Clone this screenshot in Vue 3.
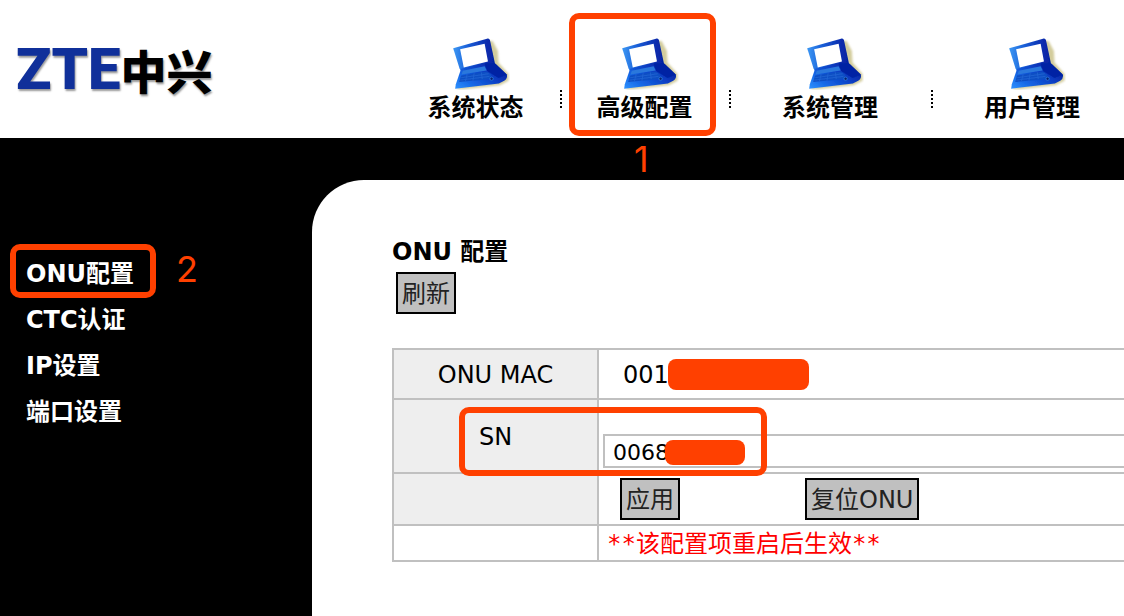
<script setup>
import { ref } from 'vue'

const tabs = [
  { label: '系统状态', wide: false, marked: false },
  { label: '高级配置', wide: false, marked: true },
  { label: '系统管理', wide: true, marked: false },
  { label: '用户管理', wide: true, marked: false },
]
const menu = ['ONU配置', 'CTC认证', 'IP设置', '端口设置']
const sn = ref('0068')
</script>

<template>
  <div class="page">
    <svg class="defs" aria-hidden="true">
      <defs>
        <linearGradient id="lid" x1="0" y1="0" x2="1" y2="0">
          <stop offset="0" stop-color="#3c98f4" />
          <stop offset="0.35" stop-color="#1a5fd8" />
          <stop offset="0.8" stop-color="#0a2cae" />
          <stop offset="1" stop-color="#0522a0" />
        </linearGradient>
        <linearGradient id="base" x1="0" y1="1" x2="1" y2="0.3">
          <stop offset="0" stop-color="#2f93ff" />
          <stop offset="0.3" stop-color="#1668e6" />
          <stop offset="0.7" stop-color="#0a3cc2" />
          <stop offset="1" stop-color="#041e98" />
        </linearGradient>
        <filter id="soft" x="-10%" y="-10%" width="120%" height="120%">
          <feGaussianBlur stdDeviation="2.5" />
        </filter>
        <filter id="edge" x="-10%" y="-10%" width="120%" height="120%">
          <feGaussianBlur stdDeviation="1.8" />
        </filter>
      </defs>
    </svg>

    <header class="header">
      <div class="logo"><span class="logo-latin">ZTE</span><span class="logo-han">中兴</span></div>
      <nav class="tabs">
        <a v-for="t in tabs" :key="t.label" href="#" class="tab" :class="{ wide: t.wide }">
          <svg class="laptop" viewBox="0 0 180 160" aria-hidden="true">
            <path d="M112 12 L128 12 L144 42 L146 78 L176 112 L176 132 L150 146 L40 158 L20 157 Z" fill="#d3cc9c" filter="url(#soft)" />
            <g filter="url(#edge)">
              <path d="M9 34 L111 5 Q117 4 120 9 L136 84 L128 92 L34 106 L28 94 Z" fill="url(#lid)" />
              <path d="M30 37 L104 20 L114 74 L41 92 Z" fill="#fff" />
              <path d="M33 96 L118 77 L137 81 L171 113 Q174 124 163 132 L147 140 L15 156 L17 143 Z" fill="url(#base)" />
              <path d="M104 80 L136 81 L170 113 L146 124 L112 103 Z" fill="#0324a4" />
              <path d="M38 102 L104 88 L110 101 L34 113 Z" fill="#2c78dc" />
              <path d="M33 116 L110 104 L124 114 L120 127 L27 136 Z" fill="#0f4fc4" />
              <path d="M33 123 L116 111 M31 130 L118 119 M51 113 L46 134 M72 110 L69 131 M94 107 L97 127" stroke="#2368d6" stroke-width="2" fill="none" />
              <circle cx="125" cy="126" r="5" fill="#062078" stroke="#368de8" stroke-width="2" />
            </g>
          </svg>
          <span>{{ t.label }}</span>
          <span v-if="t.marked" class="mark mark-tab"></span>
          <span v-if="t.marked" class="step step-tab">1</span>
        </a>
      </nav>
    </header>

    <div class="body">
      <aside class="side">
        <ul class="menu">
          <li v-for="(m, i) in menu" :key="m">
            <a href="#">{{ m }}</a>
            <template v-if="i === 0">
              <span class="mark mark-menu"></span>
              <span class="step step-menu">2</span>
            </template>
          </li>
        </ul>
      </aside>

      <main class="main">
        <h1>ONU 配置</h1>
        <button type="button" class="btn refresh">刷新</button>
        <table class="grid">
          <tbody>
            <tr class="row-mac">
              <th scope="row">ONU MAC</th>
              <td class="mac">001<span class="redact redact-mac"></span></td>
            </tr>
            <tr class="row-sn">
              <th scope="row"><label for="sn">SN</label><span class="mark mark-sn"></span></th>
              <td class="sn"><input id="sn" v-model="sn" type="text" /><span class="redact redact-sn"></span></td>
            </tr>
            <tr class="row-act">
              <th></th>
              <td class="act">
                <div class="actions">
                  <button type="button" class="btn">应用</button>
                  <button type="button" class="btn">复位ONU</button>
                </div>
              </td>
            </tr>
            <tr class="row-note">
              <th class="plain"></th>
              <td class="note"><span class="stars">**</span>该配置项重启后生效<span class="stars">**</span></td>
            </tr>
          </tbody>
        </table>
      </main>
    </div>
  </div>
</template>

<style>
body {
  background: #000;
}
</style>

<style scoped>
* {
  box-sizing: border-box;
}
.page {
  min-height: 100vh;
  display: flex;
  flex-direction: column;
  overflow: hidden;
  background: #000;
  color: #000;
  font-family: "DejaVu Sans", "Noto Sans CJK SC", sans-serif;
  font-size: 24px;
  line-height: 32px;
}
.defs {
  position: absolute;
  width: 0;
  height: 0;
}
a {
  color: inherit;
  text-decoration: none;
}
.header {
  display: flex;
  height: 138px;
  background: #fff;
}
.logo {
  flex: 0 0 393px;
  display: flex;
  align-items: center;
  padding-left: 16px;
  white-space: nowrap;
  text-shadow: 1px 2px 2px #999;
}
.logo-latin {
  color: #10309a;
  font: 900 58px/80px Roboto, sans-serif;
}
.logo-han {
  font: 900 46px/80px "Noto Sans CJK SC", sans-serif;
}
.tabs {
  display: flex;
  margin-left: -2px;
}
.tab {
  position: relative;
  flex: none;
  display: flex;
  flex-direction: column;
  align-items: center;
  width: 169px;
  padding-top: 37px;
  font-family: "Noto Sans CJK SC", sans-serif;
  font-weight: bold;
}
.tab.wide {
  width: 202px;
}
.tab + .tab::before {
  content: "";
  position: absolute;
  left: 0;
  top: 90px;
  height: 18px;
  border-left: 2px dotted #000;
}
.laptop {
  width: 60px;
  height: 53px;
  margin-left: 8px;
}
.mark {
  position: absolute;
  border: 6px solid #ff4000;
  border-radius: 10px;
  pointer-events: none;
}
.mark-tab {
  left: 9px;
  top: 13px;
  width: 147px;
  height: 123px;
}
.step {
  position: absolute;
  color: #ff4000;
  font: 400 36px/40px Inter, sans-serif;
}
.step-tab {
  left: 74px;
  top: 139px;
}
.body {
  flex: 1;
  display: flex;
}
.side {
  flex: 0 0 312px;
  padding: 113px 0 0 26px;
  color: #fff;
  font-weight: bold;
}
.menu {
  margin: 0;
  padding: 0;
  list-style: none;
}
.menu li {
  position: relative;
  line-height: 46px;
}
.mark-menu {
  left: -16px;
  top: -7px;
  width: 146px;
  height: 54px;
}
.step-menu {
  left: 150px;
  top: -2px;
}
.main {
  flex: 1;
  min-width: 0;
  margin-top: 42px;
  padding: 56px 0 40px 80px;
  background: #fff;
  border-top-left-radius: 52px;
}
h1 {
  margin: 0 0 4px;
  font-size: 24px;
  line-height: 32px;
}
.btn {
  height: 42px;
  padding: 2px 4px 0;
  border: 2px solid #000;
  border-radius: 0;
  background: #c0c0c0;
  color: #222;
  font: inherit;
}
.refresh {
  display: block;
  margin-left: 4px;
}
.grid {
  width: calc(100% + 8px);
  margin-top: 34px;
  border-collapse: collapse;
  table-layout: fixed;
}
.grid th,
.grid td {
  position: relative;
  padding: 2px 0 0;
  border: 2px solid #c0c0c0;
  font-weight: normal;
  text-align: left;
}
.grid th {
  width: 205px;
  background: #eee;
  text-align: center;
}
.grid th.plain {
  background: #fff;
}
.row-mac {
  height: 50px;
}
.row-sn {
  height: 74px;
}
.row-act {
  height: 52px;
}
.row-note {
  height: 36px;
}
.grid .mac {
  padding-left: 24px;
}
.grid .sn {
  padding: 32px 0 2px 4px;
}
.grid .act {
  padding: 0;
}
.sn input {
  display: block;
  width: 100%;
  height: 34px;
  padding: 2px 8px 0;
  border: 2px solid #c0c0c0;
  border-radius: 0;
  background: #fff;
  color: #000;
  font: 22px "DejaVu Sans", sans-serif;
  outline: none;
}
.redact {
  position: absolute;
  border-radius: 8px;
  background: #ff4000;
}
.redact-mac {
  left: 69px;
  top: 9px;
  width: 141px;
  height: 31px;
}
.redact-sn {
  left: 66px;
  top: 40px;
  width: 80px;
  height: 25px;
}
.mark-sn {
  z-index: 1;
  left: 65px;
  top: 7px;
  width: 308px;
  height: 69px;
}
.actions {
  display: flex;
  gap: 125px;
  padding-left: 21px;
}
.grid .note {
  padding-left: 8px;
  color: #f00;
}
.stars {
  font-family: "DejaVu Sans Mono", monospace;
}
</style>
